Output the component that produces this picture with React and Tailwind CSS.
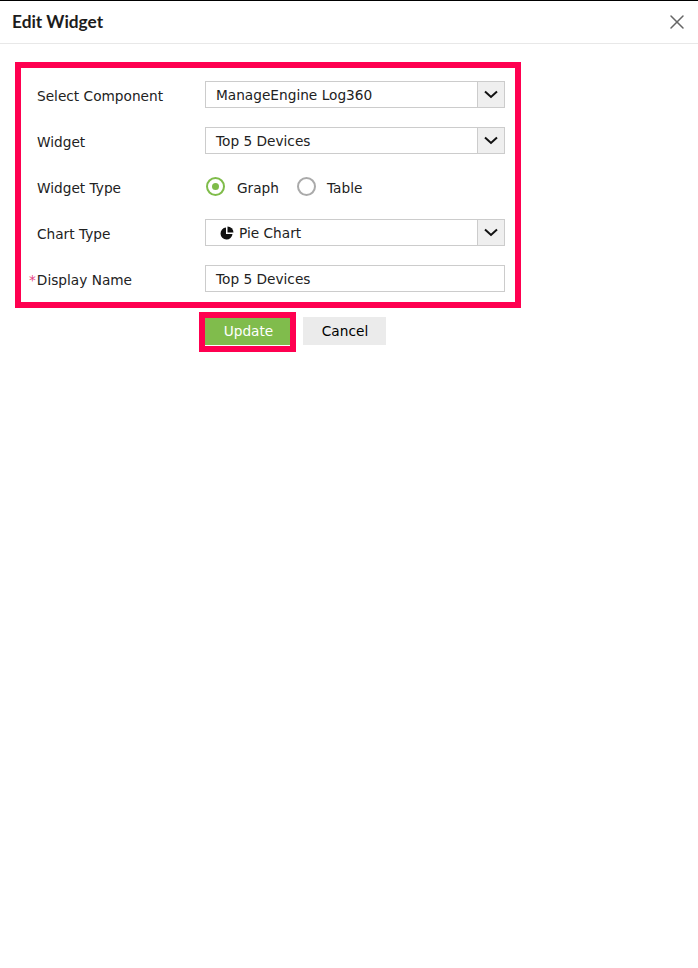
import { X } from 'lucide-react';

function SelectBox({ children }) {
  return (
    <div className="flex h-[27px] w-[300px] border border-[#cccccc] bg-white">
      <div className="flex flex-1 items-center gap-[6px] pl-[10px] pt-[1px]">{children}</div>
      <div className="flex w-[27px] items-center justify-center border-l border-[#cccccc] bg-[#efefef] pr-[1px]">
        <svg width="14" height="9" viewBox="0 0 14 9" fill="none" stroke="#111111" strokeWidth="2">
          <path d="M1 1.5 L7 7 L13 1.5" />
        </svg>
      </div>
    </div>
  );
}

function Row({ label, required, children }) {
  return (
    <div className="flex h-[27px] items-center">
      <label className="w-[184px] pl-[16px] pt-[3px]">
        {required && <span className="-ml-[8px] mr-[1px] text-[#e8417f]">*</span>}
        {label}
      </label>
      {children}
    </div>
  );
}

export default function App() {
  return (
    <div className="h-[968px] w-[698px] overflow-hidden border-t border-black bg-white font-['DejaVu_Sans',sans-serif] text-[13.7px] text-[#222222]">
      {/* Header */}
      <div className="flex h-[43px] items-center justify-between border-b border-[#e8e8e8] pl-3 pr-[9px]">
        <h1 className="font-['Lato',sans-serif] text-[17.3px] font-bold text-[#1c1c1c]">Edit Widget</h1>
        <X size={24} strokeWidth={1.5} className="text-[#666666]" />
      </div>

      {/* Form */}
      <div className="ml-[15px] mt-[18px] flex w-[506px] flex-col gap-[19px] border-[6px] border-[#ff0050] pb-[10px] pt-[13px]">
        <Row label="Select Component">
          <SelectBox>ManageEngine Log360</SelectBox>
        </Row>
        <Row label="Widget">
          <SelectBox>Top 5 Devices</SelectBox>
        </Row>
        <Row label="Widget Type">
          <div className="flex items-center pl-[1px] pt-[1px]">
            <span className="flex h-[19px] w-[19px] items-center justify-center rounded-full border-2 border-[#7fbc4a]">
              <span className="h-[7px] w-[7px] rounded-full bg-[#7fbc4a]" />
            </span>
            <span className="ml-[12px] pt-[3px]">Graph</span>
            <span className="ml-[18px] h-[19px] w-[19px] rounded-full border-2 border-[#aaaaaa]" />
            <span className="ml-[11px] pt-[3px]">Table</span>
          </div>
        </Row>
        <Row label="Chart Type">
          <SelectBox>
            <svg width="14" height="14" viewBox="0 0 14 14" className="ml-[4px]" fill="#111111">
              <path d="M6 1.5 A6 6 0 1 0 12.5 8 L6 8 Z" />
              <path d="M7.5 0.5 A6 6 0 0 1 13.5 6.5 L7.5 6.5 Z" />
            </svg>
            <span className="-ml-[1px]">Pie Chart</span>
          </SelectBox>
        </Row>
        <Row label="Display Name" required>
          <div className="flex h-[27px] w-[300px] items-center border border-[#cccccc] pl-[10px] pt-[1px]">Top 5 Devices</div>
        </Row>
      </div>

      {/* Actions */}
      <div className="ml-[199px] mt-[4px] flex items-start gap-[7px]">
        <div className="border-[6px] border-[#ff0050]">
          <button className="flex h-[28px] w-[85px] items-center justify-center border-b border-white bg-[#80bc4c] pl-[2px] text-white">Update</button>
        </div>
        <button className="mt-[5px] h-[28px] w-[83px] bg-[#ebebeb] pl-[1px] text-black">Cancel</button>
      </div>
    </div>
  );
}
